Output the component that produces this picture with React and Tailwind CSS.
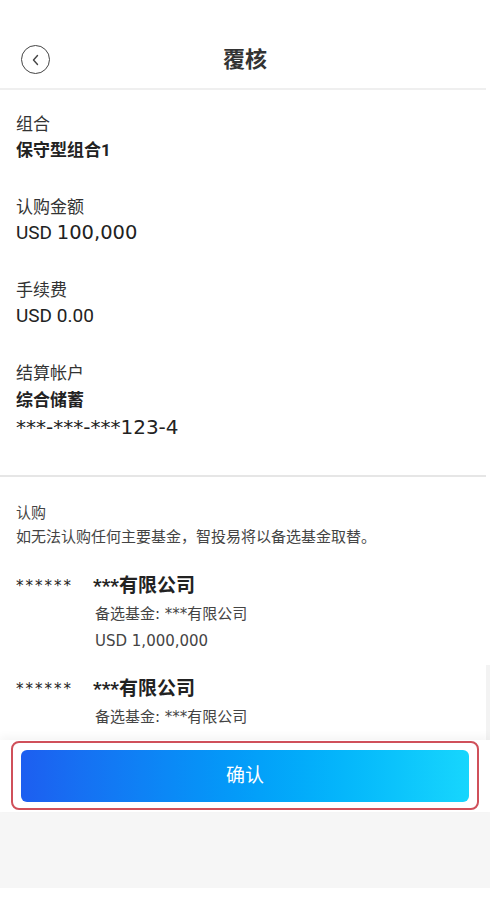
import React from 'react';

const font = "font-['Roboto','Noto_Sans_CJK_SC',sans-serif]";
const wide = "font-['DejaVu_Sans','Noto_Sans_CJK_SC',sans-serif]";

const Field = ({ label, children }) => (
    <div className="mb-[31px] last:mb-0">
        <div className="text-[17px] leading-[26px] text-[#333]">{label}</div>
        {children}
    </div>
);

const Fund = ({ code, name, alt, amount }) => (
    <div className="flex">
        <div className={`${wide} w-[77px] text-[15px] leading-[28px] text-[#222] tracking-[2px]`}>{code}</div>
        <div className="flex-1">
            <div className="text-[19px] leading-[28px] font-bold text-[#222]">{name}</div>
            <div className={`${wide} text-[15px] leading-[27px] text-[#444] mt-[1px] ml-[2px]`}>{alt}</div>
            {amount && <div className={`${wide} text-[15px] leading-[27px] text-[#444] ml-[2px]`}>{amount}</div>}
        </div>
    </div>
);

const App = () => {
    return (
        <div className={`${font} w-[490px] h-[920px] flex flex-col bg-white overflow-hidden`}>
            {/* header */}
            <div className="h-[88px] flex items-end pb-[14px] px-[21px] relative">
                <button className="w-[29px] h-[29px] rounded-full border-[1.5px] border-[#444] flex items-center justify-center">
                    <svg width="12" height="14" viewBox="0 0 12 14" fill="none">
                        <path d="M7.5 2.5 L3.5 7 L7.5 11.5" stroke="#444" strokeWidth="1.4" strokeLinecap="round" strokeLinejoin="round" />
                    </svg>
                </button>
                <div className="absolute left-0 right-0 bottom-[14px] text-center text-[22px] leading-[29px] font-bold text-[#333] pointer-events-none">
                    覆核
                </div>
            </div>
            <div className="h-[2px] bg-[#efefef] mr-[4px]" />

            {/* scrolling content */}
            <div className="flex-1 overflow-hidden relative">
                <div className="px-[16px] pt-[21px] pb-[35px]">
                    <Field label="组合">
                        <div className="text-[17px] leading-[26px] font-bold text-[#222]">保守型组合1</div>
                    </Field>
                    <Field label="认购金额">
                        <div className="text-[19px] leading-[26px] text-[#222]">
                            USD <span className={`${wide} text-[19.5px]`}>100,000</span>
                        </div>
                    </Field>
                    <Field label="手续费">
                        <div className="text-[19px] leading-[26px] text-[#222]">USD 0.00</div>
                    </Field>
                    <Field label="结算帐户">
                        <div className="text-[17px] leading-[28px] font-bold text-[#222]">综合储蓄</div>
                        <div className={`${wide} text-[20px] leading-[26px] text-[#222]`}>***-***-***123-4</div>
                    </Field>
                </div>
                <div className="h-[2px] bg-[#e6e6e6] mr-[4px]" />

                <div className="px-[16px] pt-[25px]">
                    <div className="text-[15px] leading-[22px] text-[#444]">认购</div>
                    <div className="text-[15px] leading-[27px] text-[#444]">如无法认购任何主要基金，智投易将以备选基金取替。</div>
                    <div className="mt-[21px] flex flex-col gap-[20px]">
                        <Fund code="******" name="***有限公司" alt="备选基金: ***有限公司" amount="USD 1,000,000" />
                        <Fund code="******" name="***有限公司" alt="备选基金: ***有限公司" />
                    </div>
                </div>
                <div className="absolute right-0 top-[575px] bottom-0 w-[4px] bg-[#f3f3f3]" />
            </div>

            {/* bottom bar */}
            <div className="h-[72px] bg-white shadow-[0_-4px_8px_rgba(0,0,0,0.04)] relative">
                <div className="mx-[11px] mt-[1px] h-[69px] border-2 border-[#d0505a] rounded-[8px] px-[8px] pt-[7px]">
                    <button className="w-full h-[52px] rounded-[6px] bg-gradient-to-r from-[#1d5ef0] to-[#17d6fd] text-white text-[19px]">
                        确认
                    </button>
                </div>
            </div>
            <div className="h-[76px] bg-[#f6f6f6]" />
            <div className="h-[32px] bg-white" />
        </div>
    );
};

export default App;
